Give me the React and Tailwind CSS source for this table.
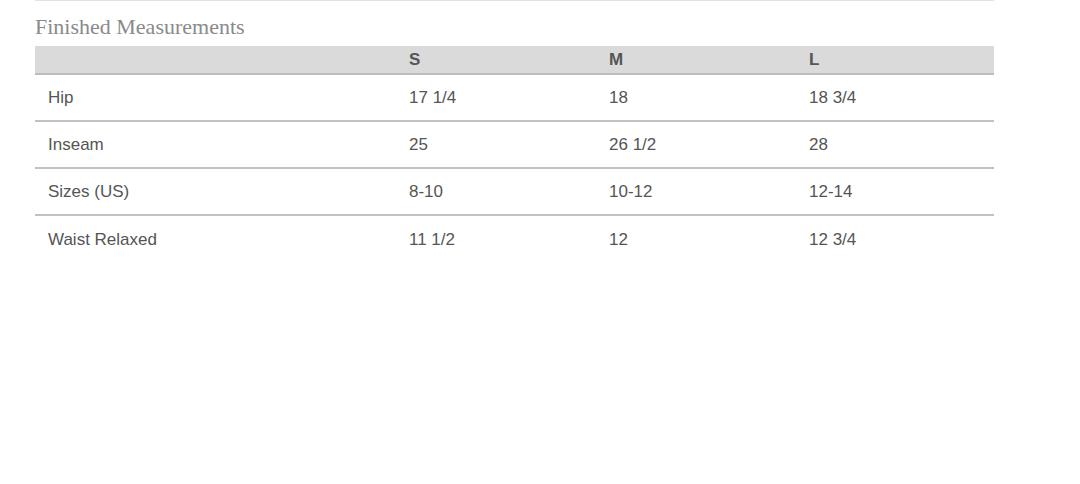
import React from 'react';

const rows = [
    ['Hip', '17 1/4', '18', '18 3/4'],
    ['Inseam', '25', '26 1/2', '28'],
    ['Sizes (US)', '8-10', '10-12', '12-14'],
    ['Waist Relaxed', '11 1/2', '12', '12 3/4'],
];

export default function App() {
    return (
        <div className="min-h-[484px] bg-white pl-[35px] pr-[86px]">
            <div className="w-[959px] border-t border-[#e2e2e2]">
                <h2 className="text-[22px] leading-[26px] pt-[13px] pb-[6px] text-[#8a8a8a] font-['Liberation_Serif',serif]">
                    Finished Measurements
                </h2>
                <div className="font-['Liberation_Sans',Arial,sans-serif] text-[17px] text-[#555]">
                    <div className="grid grid-cols-[361px_200px_200px_1fr] h-[29px] bg-[#dadada] border-b-2 border-[#bdbdbd] font-bold items-center">
                        <div className="px-[13px]"></div>
                        <div className="px-[13px]">S</div>
                        <div className="px-[13px]">M</div>
                        <div className="px-[13px]">L</div>
                    </div>
                    {rows.map((r, i) => (
                        <div
                            key={i}
                            className={`grid grid-cols-[361px_200px_200px_1fr] h-[47px] items-center ${i < rows.length - 1 ? 'border-b-2 border-[#c2c2c2]' : ''}`}
                        >
                            {r.map((c, j) => (
                                <div key={j} className="px-[13px]">{c}</div>
                            ))}
                        </div>
                    ))}
                </div>
            </div>
        </div>
    );
}
